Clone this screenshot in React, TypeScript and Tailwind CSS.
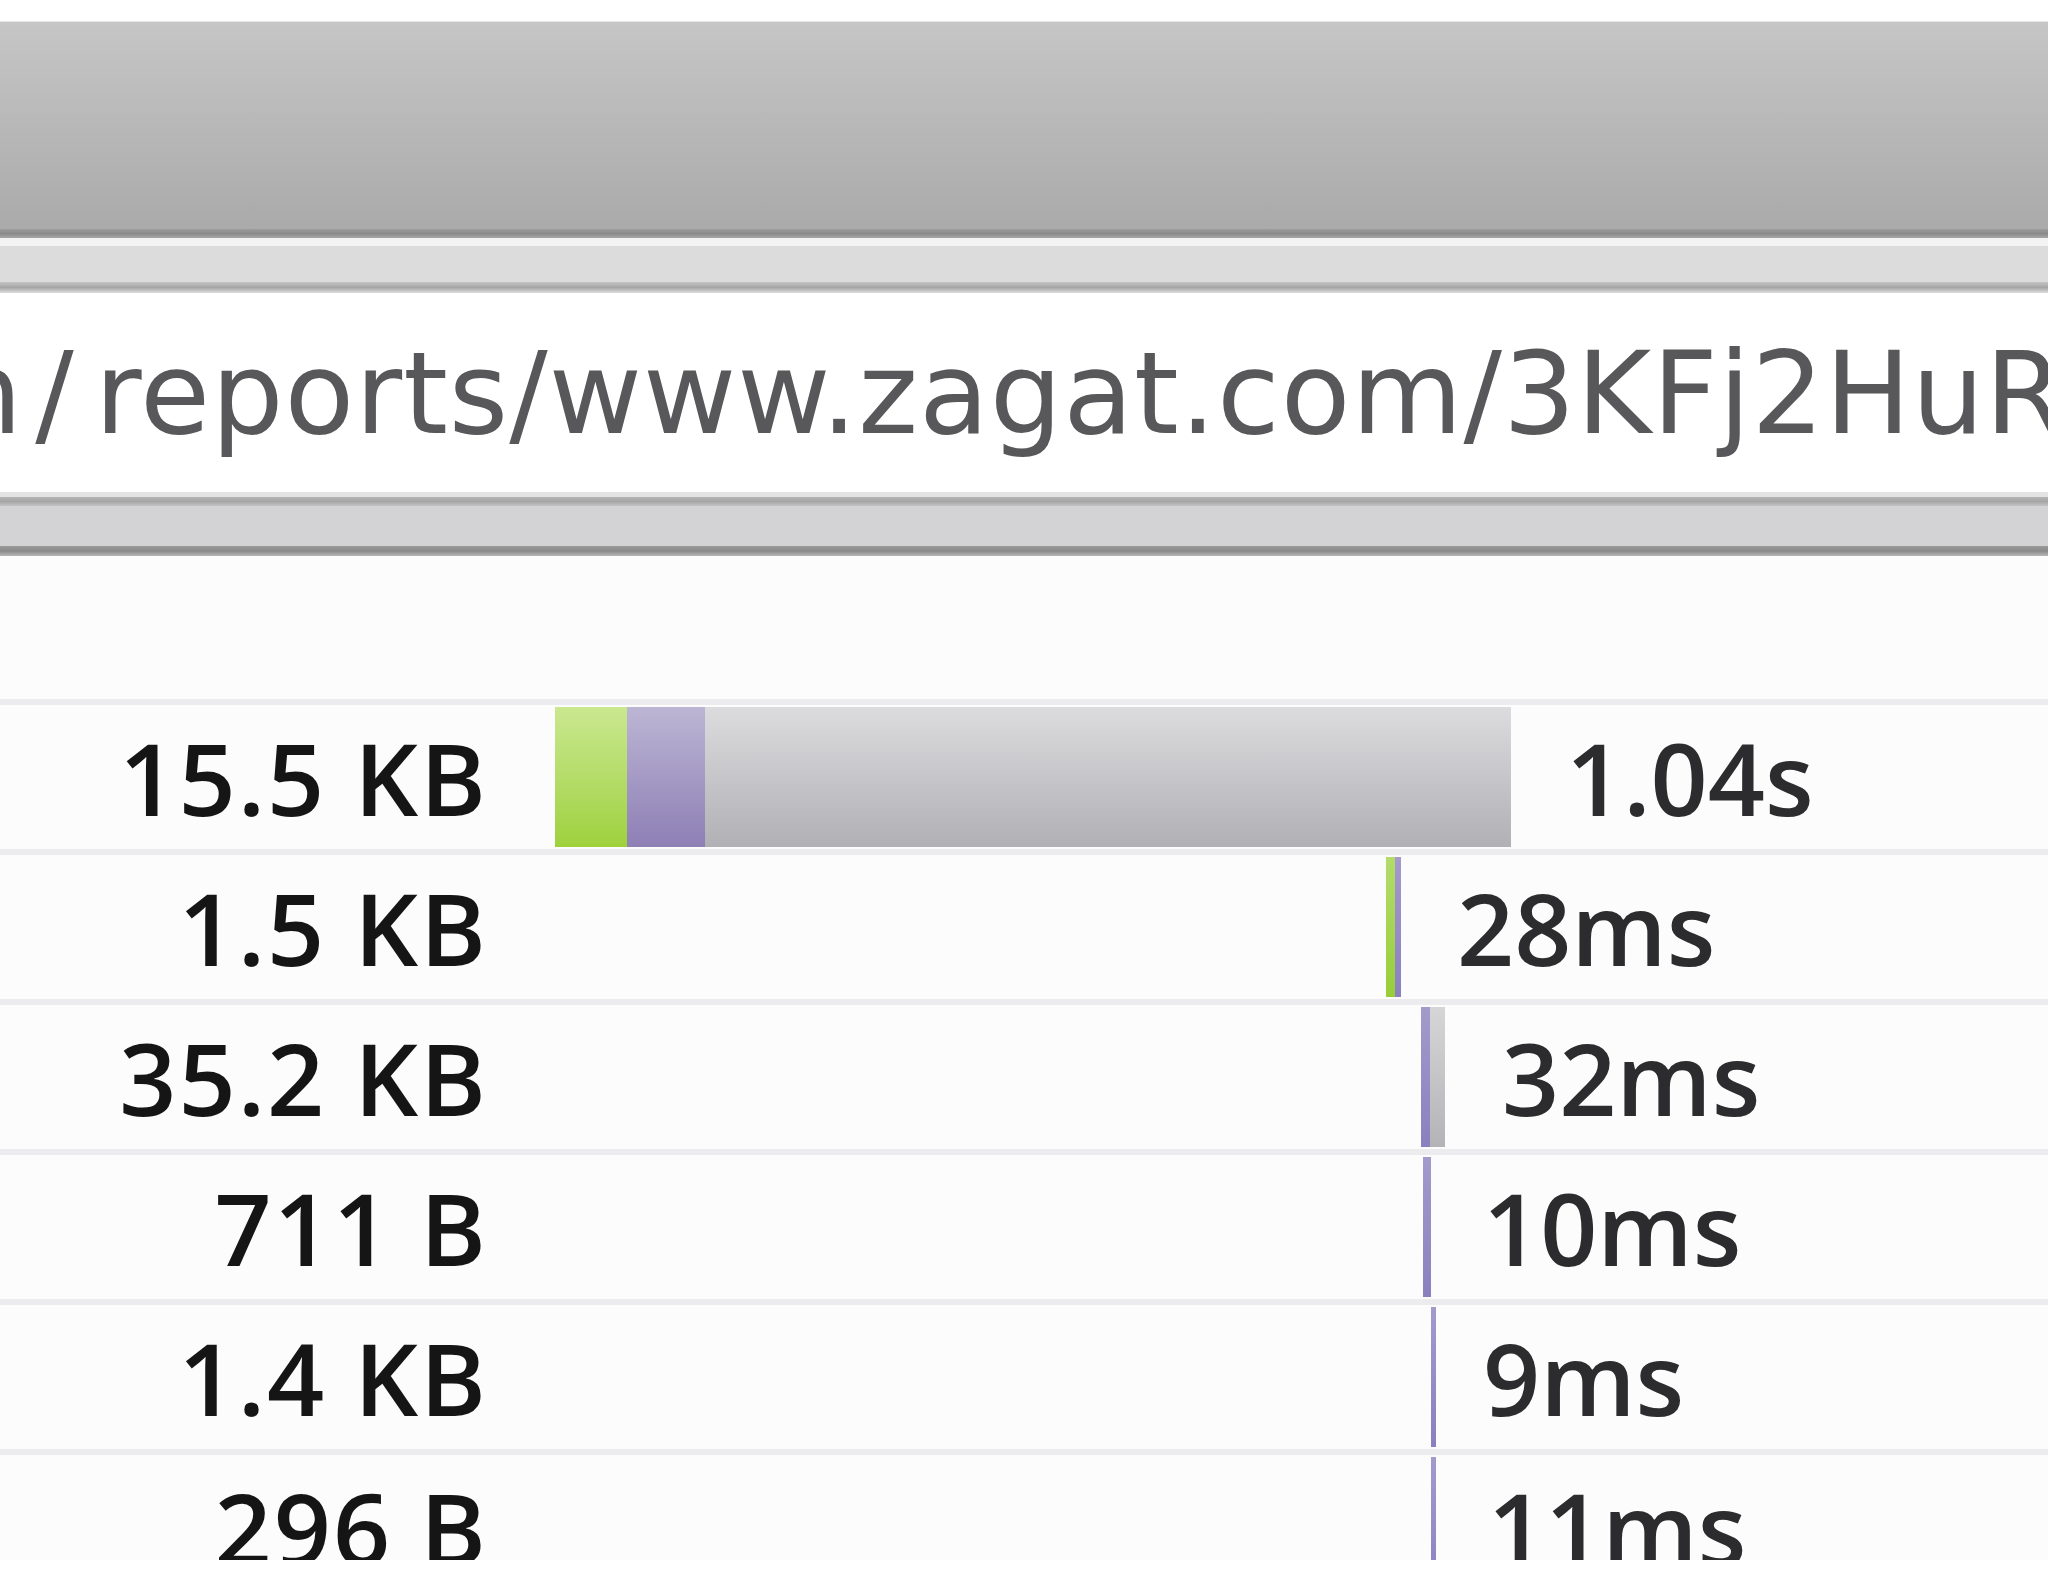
import React from "react";

type Seg = { w: number; kind: "green" | "purple" | "gray" | "lineGreen" | "linePurple" | "lineGray" };
type Row = { size: string; offset: number; segs: Seg[]; gap: number; time: string };

const rows: Row[] = [
  { size: "15.5 KB", offset: 67, segs: [{ w: 72, kind: "green" }, { w: 78, kind: "purple" }, { w: 806, kind: "gray" }], gap: 55, time: "1.04s" },
  { size: "1.5 KB", offset: 898, segs: [{ w: 9, kind: "lineGreen" }, { w: 6, kind: "linePurple" }], gap: 56, time: "28ms" },
  { size: "35.2 KB", offset: 933, segs: [{ w: 9, kind: "linePurple" }, { w: 15, kind: "lineGray" }], gap: 57, time: "32ms" },
  { size: "711 B", offset: 935, segs: [{ w: 8, kind: "linePurple" }], gap: 52, time: "10ms" },
  { size: "1.4 KB", offset: 943, segs: [{ w: 5, kind: "linePurple" }], gap: 47, time: "9ms" },
  { size: "296 B", offset: 943, segs: [{ w: 5, kind: "linePurple" }], gap: 52, time: "11ms" },
];

const segClass: Record<Seg["kind"], string> = {
  green: "bg-linear-to-b from-[#cae88f] to-[#9fd13b]",
  purple: "bg-linear-to-b from-[#bcb6d4] to-[#8e7fb5]",
  gray: "bg-linear-to-b from-[#dcdcde] to-[#b1b0b5]",
  lineGreen: "bg-linear-to-b from-[#b3dc6a] to-[#98cd38]",
  linePurple: "bg-linear-to-b from-[#a29bcb] to-[#8a80bf]",
  lineGray: "bg-linear-to-b from-[#d6d6d8] to-[#b4b4b8]",
};

export default function App() {
  return (
    <div className="w-[2048px] h-[1582px] overflow-hidden bg-white flex flex-col">
      {/* top white edge */}
      <div className="h-[22px] shrink-0 bg-white border-b border-[#e6e6e6]" />
      {/* toolbar */}
      <div className="h-[207px] shrink-0 bg-linear-to-b from-[#c6c6c6] to-[#aaaaaa]" />
      <div className="h-[9px] shrink-0 bg-linear-to-b from-[#9d9d9d] via-[#8a8a8a] to-[#a8a8a8]" />
      <div className="h-[8px] shrink-0 bg-[#f3f3f3]" />
      <div className="h-[36px] shrink-0 bg-[#dcdcdc]" />
      <div className="h-[11px] shrink-0 bg-linear-to-b from-[#c4c4c4] via-[#a6a6a6] to-[#dedede]" />
      {/* url field */}
      <div className="h-[199px] shrink-0 bg-white overflow-hidden whitespace-nowrap pt-[44px] font-['DejaVu_Sans',sans-serif] text-[114px] leading-none tracking-[1px] text-[#58585b]">
        <span className="-ml-[50px]">n</span>
        <span className="ml-[12px]">/</span>
        <span className="ml-[20px]">reports/www.zagat.com/3KFj2HuR</span>
      </div>
      <div className="h-[5px] shrink-0 bg-[#e3e3e3]" />
      <div className="h-[9px] shrink-0 bg-linear-to-b from-[#b4b4b4] via-[#a5a5a5] to-[#c4c4c4]" />
      <div className="h-[40px] shrink-0 bg-[#d3d3d5]" />
      <div className="h-[10px] shrink-0 bg-linear-to-b from-[#9a9a9a] via-[#8a8a8a] to-[#b8b8b8]" />
      {/* rows */}
      <div className="h-[1004px] shrink-0 overflow-hidden bg-[#fcfcfd] flex flex-col">
        <div className="h-[143px] shrink-0" />
        {rows.map((r, i) => (
          <div key={i} className="shrink-0 flex flex-col">
            <div className="h-[6px] bg-[#ececef]" />
            <div className="h-[144px] flex items-stretch font-['Open_Sans',Arial,sans-serif] font-semibold text-[100px] leading-none">
              <div className="w-[488px] shrink-0 flex items-center justify-end tracking-[2px] text-[#151515]">{r.size}</div>
              <div className="flex-1 flex items-stretch py-[2px]">
                <div className="shrink-0" style={{ width: r.offset }} />
                {r.segs.map((s, j) => (
                  <div key={j} className={`shrink-0 ${segClass[s.kind]}`} style={{ width: s.w }} />
                ))}
                <div className="shrink-0 flex items-center text-[#2c2c2e]" style={{ marginLeft: r.gap }}>
                  {r.time}
                </div>
              </div>
            </div>
          </div>
        ))}
      </div>
      <div className="flex-1 bg-white" />
    </div>
  );
}
